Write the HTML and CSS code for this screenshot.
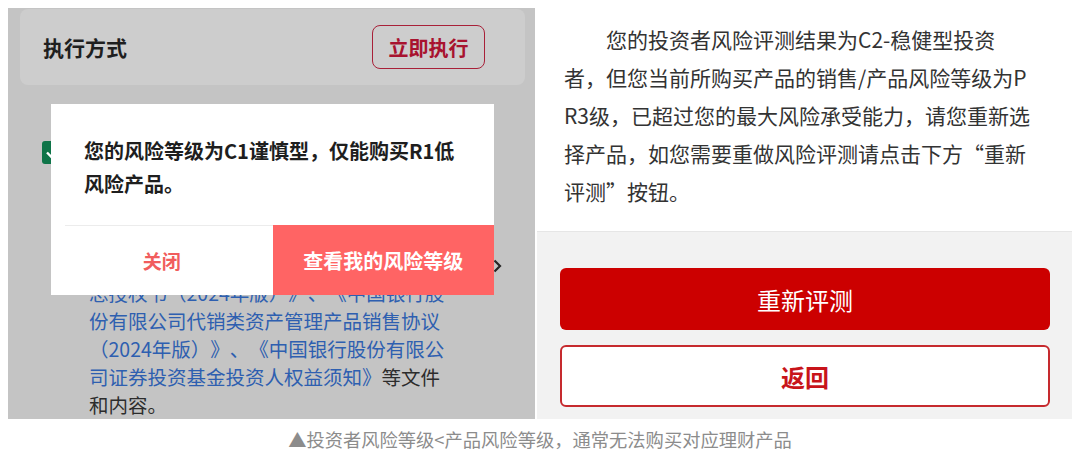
FILE: index.html
```html
<!DOCTYPE html>
<html lang="zh-CN">
<head>
    <meta charset="UTF-8">
    <title>风险等级提示</title>
    <link rel="stylesheet" href="styles.css">
</head>
<body>

    <div class="shots">
        <!-- 左图：执行页 + 弹窗 -->
        <div class="shot-left">
            <div class="exec-card">
                <span class="exec-title">执行方式</span>
                <span class="exec-btn">立即执行</span>
            </div>

            <div class="agree-row">
                <span class="check">
                    <svg width="22" height="22" viewBox="0 0 22 22"><path d="M5 11.5l4 4 8-8" fill="none" stroke="#fff" stroke-width="2.4"/></svg>
                </span>
                <div class="agree-text">
                    <span class="plain">本人确认已经认真阅读并充分理解及同意</span><span class="link">《中国银行股份有限公司个人客户投资理财服务协议》、《中国银行个人客户风险承受能力评估问卷》、《中国银行个人客户理财产品投资交易及代销业务综合服务总授权书（2024年版）》、《中国银行股份有限公司代销类资产管理产品销售协议（2024年版）》、《中国银行股份有限公司证券投资基金投资人权益须知》</span><span class="plain">等文件和内容。</span>
                </div>
                <svg class="chev" width="9" height="14" viewBox="0 0 9 14"><path d="M1.5 1.5l5.5 5.5-5.5 5.5" fill="none" stroke="#262626" stroke-width="2.2"/></svg>
            </div>

            <div class="dialog">
                <p class="dialog-msg">您的风险等级为C1谨慎型，仅能购买R1低风险产品。</p>
                <div class="dialog-line"></div>
                <div class="dialog-btns">
                    <span class="btn-close">关闭</span>
                    <span class="btn-view">查看我的风险等级</span>
                </div>
            </div>
        </div>

        <!-- 右图：风险不匹配提示 -->
        <div class="shot-right">
            <p class="notice">您的投资者风险评测结果为C2-稳健型投资者，但您当前所购买产品的销售/产品风险等级为PR3级，已超过您的最大风险承受能力，请您重新选择产品，如您需要重做风险评测请点击下方“重新评测”按钮。</p>
            <div class="actions">
                <span class="btn-retest">重新评测</span>
                <span class="btn-back">返回</span>
            </div>
        </div>
    </div>

    <div class="caption">▲投资者风险等级&lt;产品风险等级，通常无法购买对应理财产品</div>

</body>
</html>
```

FILE: styles.css
```css
body {
    margin: 0;
    background: #fff;
    font-family: "Noto Sans CJK SC", "Noto Sans", sans-serif;
    text-spacing-trim: space-all;
}

.shots {
    display: flex;
    gap: 2px;
    padding: 8px 0 0 8px;
    height: 411px;
}

/* 左图 */
.shot-left {
    position: relative;
    width: 527px;
    background: #c4c4c4;
    overflow: hidden;
}

.exec-card {
    display: flex;
    justify-content: space-between;
    align-items: center;
    margin: 1px 10px 0 12px;
    height: 76px;
    padding: 0 40px 0 23px;
    background: #cdcdcd;
    border-radius: 8px;
}

.exec-title {
    font-size: 21px;
    font-weight: bold;
    color: #1f1f1f;
}

.exec-btn {
    width: 111px;
    height: 42px;
    display: flex;
    justify-content: center;
    align-items: center;
    border: 1.5px solid #a82038;
    border-radius: 8px;
    color: #a8132f;
    font-size: 20px;
    font-weight: bold;
}

.agree-row {
    display: flex;
    align-items: flex-start;
    padding: 54px 0 0 34px;
}

.check {
    width: 22px;
    height: 23px;
    margin-top: 2px;
    background: #0e7448;
    border-radius: 3px;
    flex-shrink: 0;
}

.check svg {
    display: block;
}

.agree-text {
    width: 358px;
    margin-left: 25px;
    font-size: 19.5px;
    line-height: 28px;
    color: #2c2c2c;
    flex-shrink: 0;
}

.agree-text .link {
    color: #2e5fb0;
}

.chev {
    margin: 120px 0 0 46px;
}

.dialog {
    position: absolute;
    left: 43px;
    top: 96px;
    width: 443px;
    background: #fff;
}

.dialog-msg {
    margin: 0;
    padding: 30px 30px 25px 33px;
    font-size: 20px;
    line-height: 33px;
    font-weight: bold;
    color: #1e1e1e;
}

.dialog-line {
    margin: 0 14px;
    height: 1px;
    background: #ececec;
}

.dialog-btns {
    display: flex;
    height: 69px;
}

.dialog-btns span {
    flex: 1;
    display: flex;
    justify-content: center;
    align-items: center;
    font-weight: bold;
}

.btn-close {
    color: #f15d5d;
    font-size: 19px;
}

.btn-view {
    background: #ff6464;
    color: #fff;
    font-size: 20px;
    margin-top: -1px;
}

/* 右图 */
.shot-right {
    width: 535px;
    display: flex;
    flex-direction: column;
    background: #fff;
}

.notice {
    margin: 0;
    height: 223px;
    box-sizing: border-box;
    padding: 12px 42px 0 27px;
    font-size: 21px;
    line-height: 38px;
    color: #333;
    text-indent: 2em;
    word-break: break-all;
}

.actions {
    flex: 1;
    display: flex;
    flex-direction: column;
    gap: 15px;
    padding: 36px 22px 0 23px;
    background: #f2f2f2;
    border-top: 1px solid #e6e6e6;
}

.actions span {
    height: 62px;
    box-sizing: border-box;
    display: flex;
    justify-content: center;
    align-items: center;
    border-radius: 6px;
    font-size: 24px;
}

.btn-retest {
    background: #cc0000;
    color: #fff;
}

.btn-back {
    background: #fff;
    border: 2px solid #c62a2e;
    color: #c8141a;
    font-weight: bold;
}

.caption {
    text-align: center;
    margin-top: 7px;
    font-size: 18.3px;
    color: #8c8c8c;
}
```
